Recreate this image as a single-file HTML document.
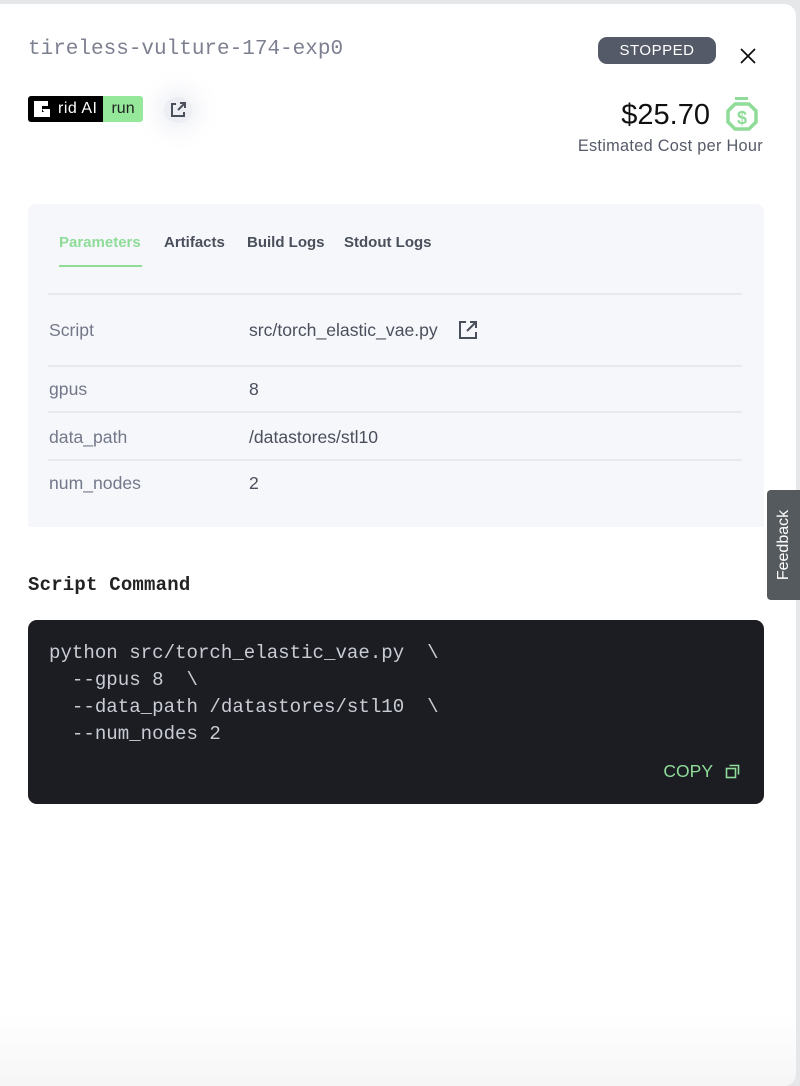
<!DOCTYPE html>
<html><head><meta charset="utf-8"><style>
body{margin:0;width:800px;height:1086px;background:#e6e7e9;font-family:"Liberation Sans",sans-serif;position:relative;overflow:hidden}
.panel{position:absolute;left:0;top:4px;width:796px;height:1082px;background:linear-gradient(#fff 0,#fff 1010px,#f6f6f6 1082px);border-radius:0 12px 12px 0}
.mono{font-family:"Liberation Mono",monospace}
.title{position:absolute;left:28px;top:34px;font-size:21px;color:#7c8090}
.badge{position:absolute;left:28px;top:92px;height:26px;display:flex;border-radius:3px;overflow:hidden;font-size:16px}
.badge .a{background:#000;color:#fff;padding:0 6px 0 4px;display:flex;align-items:center;gap:6px;letter-spacing:.5px}
.badge .b{background:#95e89a;color:#222;padding:0 8px;display:flex;align-items:center}
.ext{position:absolute;left:164px;top:93px;width:28px;height:26px;border-radius:50%;background:#eceef3;box-shadow:0 0 20px 8px rgba(230,232,240,.6)}
.stopped{position:absolute;left:598px;top:33px;width:118px;height:27px;border-radius:9px;background:#555a68;color:#fff;font-size:15px;text-align:center;line-height:27px;letter-spacing:.5px}
.price{position:absolute;right:86px;top:95px;font-size:29px;color:#111}
.est{position:absolute;right:33px;top:133px;font-size:16.3px;color:#555a68;letter-spacing:.3px}
.card{position:absolute;left:28px;top:200px;width:736px;height:323px;background:#f6f7fb;border-radius:8px 8px 0 0}
.tabs{position:absolute;left:31px;top:30px;font-size:15px;font-weight:bold;color:#4a4f5c}
.tabs span{position:absolute;white-space:nowrap}
.ul{position:absolute;left:31px;top:61px;width:83px;height:2px;background:#8fdc99}
.row{position:absolute;left:20px;width:694px;border-top:2px solid #e7e9ee;font-size:17.6px;color:#4a4f5c}
.row .k{position:absolute;left:1px;color:#737889}
.row .v{position:absolute;left:201px}
.sc{position:absolute;left:28px;top:570px;font-size:19px;font-weight:bold;color:#222;letter-spacing:.2px}
.code{position:absolute;left:28px;top:616px;width:736px;height:184px;background:#1b1d23;border-radius:9px}
.code pre{margin:0;position:absolute;left:21px;top:20px;font-family:"Liberation Mono",monospace;font-size:19.1px;line-height:27px;color:#c9ccd4}
.copy{position:absolute;right:24px;top:141px;color:#8fdc99;font-size:17.5px;display:flex;gap:12px;align-items:center}
.fb{position:absolute;left:767px;top:490px;width:33px;height:110px;background:#555a5e;border-radius:4px 0 0 4px;color:#fff}
.fb span{position:absolute;left:50%;top:50%;transform:translate(-50%,-50%) rotate(-90deg);font-size:16px;white-space:nowrap}
</style></head><body>
<div class="panel">
<div class="title mono">tireless-vulture-174-exp0</div>
<div class="badge"><div class="a"><svg width="20" height="20" viewBox="0 0 20 20"><path d="M2 2h14v5h-6v6h6v5H2z M10 10h8v8h-3z" fill="#fff"/></svg>rid AI</div><div class="b">run</div></div>
<div class="ext"><svg width="28" height="26" viewBox="0 0 28 26"><path d="M12 7H8v12h12v-4M14 13l7-7M16 6h5v5" fill="none" stroke="#4a4f5c" stroke-width="2"/></svg></div>
<div class="stopped">STOPPED</div>
<svg style="position:absolute;left:739px;top:43px" width="18" height="18" viewBox="0 0 18 18"><path d="M2 2l14 14M16 2L2 16" stroke="#111" stroke-width="1.8"/></svg>
<div class="price">$25.70</div>
<svg style="position:absolute;left:722px;top:90px" width="40" height="42" viewBox="0 0 40 42"><rect x="13" y="3" width="13" height="3" fill="#8fdc99"/><path d="M13 10h14l7 7v11l-7 7H13l-7-7V17z" fill="none" stroke="#8fdc99" stroke-width="3.5"/><text x="20" y="30" font-size="18" font-weight="bold" fill="#8fdc99" text-anchor="middle" font-family="Liberation Sans">$</text></svg>
<div class="est">Estimated Cost per Hour</div>
<div class="card">
<div class="tabs"><span style="left:0;color:#8fdc99">Parameters</span><span style="left:105px">Artifacts</span><span style="left:188px">Build Logs</span><span style="left:285px">Stdout Logs</span></div>
<div class="ul"></div>
<div class="row" style="top:89px"><span class="k" style="top:25px">Script</span><span class="v" style="top:25px">src/torch_elastic_vae.py</span><svg style="position:absolute;left:410px;top:25px" width="20" height="20" viewBox="0 0 20 20"><path d="M8 2H2v16h16v-6M9 11l8-8M12 2h6v6" fill="none" stroke="#4a4f5c" stroke-width="2"/></svg></div>
<div class="row" style="top:161px"><span class="k" style="top:12px">gpus</span><span class="v" style="top:12px">8</span></div>
<div class="row" style="top:207px"><span class="k" style="top:14px">data_path</span><span class="v" style="top:14px">/datastores/stl10</span></div>
<div class="row" style="top:255px"><span class="k" style="top:12px">num_nodes</span><span class="v" style="top:12px">2</span></div>
</div>
<div class="sc mono">Script Command</div>
<div class="code"><pre>python src/torch_elastic_vae.py  \
  --gpus 8  \
  --data_path /datastores/stl10  \
  --num_nodes 2</pre>
<div class="copy">COPY <svg width="15" height="15" viewBox="0 0 15 15"><rect x="1.5" y="4.5" width="9" height="9" fill="none" stroke="#8fdc99" stroke-width="1.6"/><path d="M4.5 1.5h9v9" fill="none" stroke="#8fdc99" stroke-width="1.6"/></svg></div>
</div>
</div>
<div class="fb"><span>Feedback</span></div>
</body></html>
